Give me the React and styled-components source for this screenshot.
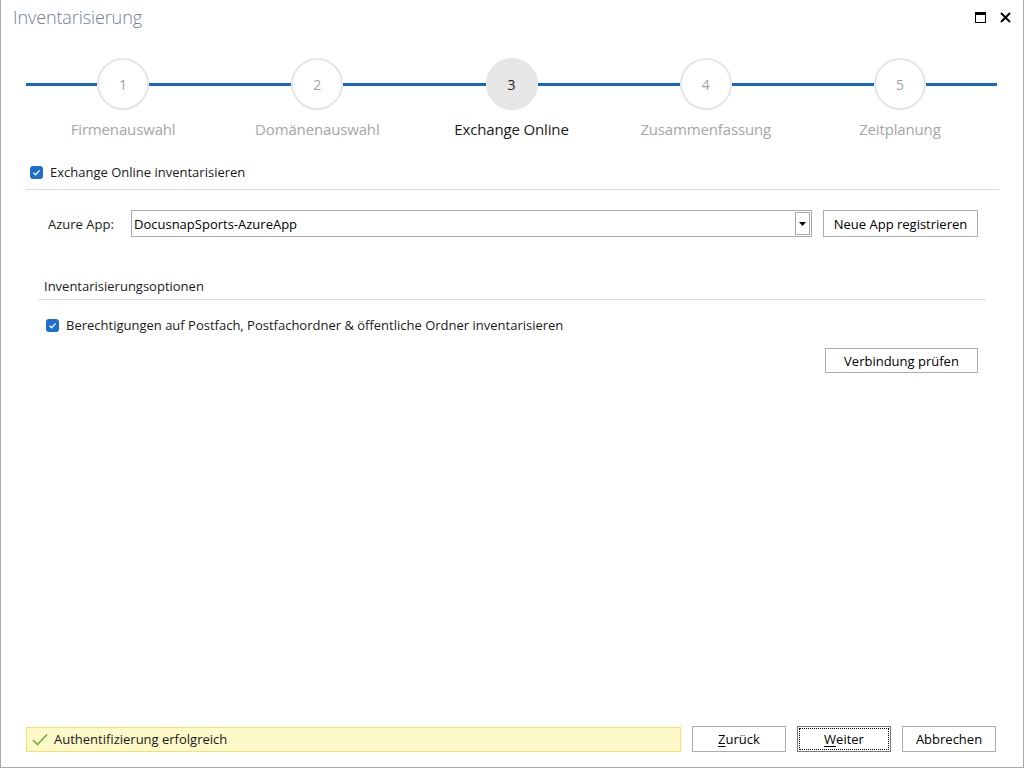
import React from "react";
import styled, { createGlobalStyle } from "styled-components";

const Global = createGlobalStyle`
  html, body { margin: 0; padding: 0; background: #fff; }
  body { font-family: "Open Sans", "Noto Sans", sans-serif; }
  * { box-sizing: border-box; }
`;

const Window = styled.div`
  width: 1024px;
  height: 768px;
  border: 1px solid #a9a9a9;
  border-top: none;
  display: flex;
  flex-direction: column;
  background: #fff;
  overflow: hidden;
`;

const TitleBar = styled.div`
  height: 34px;
  display: flex;
  align-items: center;
  justify-content: space-between;
  padding: 0 10px 0 12px;
`;

const Title = styled.div`
  font-size: 18px;
  font-weight: 300;
  color: #728195;
  letter-spacing: -0.1px;
`;

const WinButtons = styled.div`
  display: flex;
  align-items: center;
  gap: 10px;
`;

const WinButton = styled.div`
  width: 15px;
  height: 15px;
  display: flex;
  align-items: center;
  justify-content: center;
`;

const Stepper = styled.div`
  display: grid;
  grid-template-columns: repeat(5, 1fr);
  margin: 24px 26px 0 25px;
`;

const Step = styled.div`
  display: flex;
  flex-direction: column;
  align-items: center;
`;

const StepTrack = styled.div`
  display: flex;
  align-items: center;
  width: 100%;
`;

const Line = styled.div`
  flex: 1;
  height: 3px;
  background: #1766bf;
`;

const Circle = styled.div`
  width: 52px;
  height: 52px;
  border-radius: 50%;
  border: 2px solid #e6e6e6;
  background: ${(p) => (p.$active ? "#e6e6e6" : "#fff")};
  color: ${(p) => (p.$active ? "#222" : "#a3a3a3")};
  display: flex;
  align-items: center;
  justify-content: center;
  font-size: 14px;
  flex: none;
`;

const StepLabel = styled.div`
  margin-top: 9px;
  font-size: 15px;
  line-height: 20px;
  color: ${(p) => (p.$active ? "#1a1a1a" : "#a6a6a6")};
  letter-spacing: -0.15px;
`;

const Content = styled.div`
  flex: 1;
  display: flex;
  flex-direction: column;
  padding: 0 24px 0 25px;
`;

const CheckRow = styled.label`
  display: flex;
  align-items: center;
  gap: 7px;
  height: 20px;
  font-size: 13px;
  color: #1a1a1a;
  padding-left: ${(p) => p.$indent || 0}px;
  margin-top: ${(p) => p.$top || 0}px;
`;

const Box = styled.span`
  width: 13px;
  height: 13px;
  border-radius: 3px;
  background: #1c6fcd;
  display: inline-flex;
  align-items: center;
  justify-content: center;
  flex: none;
`;

const Separator = styled.div`
  height: 1px;
  background: #dcdcdc;
  margin-top: ${(p) => p.$top || 0}px;
`;

const FormRow = styled.div`
  display: flex;
  align-items: center;
  gap: 11px;
  margin-top: 20px;
  padding: 0 21px 0 22px;
`;

const FieldLabel = styled.div`
  width: 72px;
  font-size: 13px;
  color: #1a1a1a;
`;

const Combo = styled.div`
  flex: 1;
  height: 27px;
  border: 1px solid #a9a9a9;
  display: flex;
  align-items: center;
  padding: 0 1px 0 2px;
  font-size: 13px;
  color: #000;
`;

const ComboText = styled.div`
  flex: 1;
`;

const ComboArrow = styled.div`
  width: 15px;
  height: 23px;
  border: 1px solid #a9a9a9;
  display: flex;
  align-items: center;
  justify-content: center;
`;

const Button = styled.button`
  width: ${(p) => p.$w || 94}px;
  height: ${(p) => p.$h || 26}px;
  border: 1px solid ${(p) => (p.$focus ? "#7a7a7a" : "#adadad")};
  background: #fff;
  font-family: inherit;
  font-size: 13px;
  color: #000;
  padding: 0;
  outline: ${(p) => (p.$focus ? "1px dotted #000" : "none")};
  outline-offset: -3px;
  flex: none;
  u { text-decoration: underline; text-underline-offset: 2px; }
`;

const Group = styled.div`
  margin: 40px 13px 0 12px;
  display: flex;
  flex-direction: column;
`;

const GroupTitle = styled.div`
  font-size: 13px;
  line-height: 18px;
  color: #1a1a1a;
  padding-left: 6px;
`;

const RightRow = styled.div`
  display: flex;
  justify-content: flex-end;
  padding-right: 8px;
  margin-top: 13px;
`;

const Footer = styled.div`
  display: flex;
  align-items: center;
  padding: 0 27px 15px 25px;
  gap: 11px;
`;

const Status = styled.div`
  flex: 1;
  height: 25px;
  background: #fdf9c9;
  border: 1px solid #f4e06b;
  display: flex;
  align-items: center;
  gap: 6px;
  padding-left: 5px;
  font-size: 13px;
  color: #1a1a1a;
`;

const Buttons = styled.div`
  display: flex;
  gap: 11px;
`;

const Check = () => (
  <Box>
    <svg width="9" height="9" viewBox="0 0 9 9">
      <path d="M1.5 4.8 L3.6 6.8 L7.6 2.4" fill="none" stroke="#fff" strokeWidth="1.3" />
    </svg>
  </Box>
);

const steps = ["Firmenauswahl", "Domänenauswahl", "Exchange Online", "Zusammenfassung", "Zeitplanung"];

export default function App() {
  return (
    <>
      <Global />
      <Window>
        <TitleBar>
          <Title>Inventarisierung</Title>
          <WinButtons>
            <WinButton>
              <svg width="11" height="11" viewBox="0 0 11 11">
                <rect x="0.5" y="0.5" width="10" height="10" fill="none" stroke="#000" />
                <rect x="0" y="0" width="11" height="3" fill="#000" />
              </svg>
            </WinButton>
            <WinButton>
              <svg width="11" height="11" viewBox="0 0 11 11">
                <path d="M1 1 L10 10 M10 1 L1 10" stroke="#000" strokeWidth="2" />
              </svg>
            </WinButton>
          </WinButtons>
        </TitleBar>

        <Stepper>
          {steps.map((s, i) => (
            <Step key={s}>
              <StepTrack>
                <Line />
                <Circle $active={i === 2}>{i + 1}</Circle>
                <Line />
              </StepTrack>
              <StepLabel $active={i === 2}>{s}</StepLabel>
            </Step>
          ))}
        </Stepper>

        <Content>
          <CheckRow $indent={4} $top={23}>
            <Check />
            Exchange Online inventarisieren
          </CheckRow>
          <Separator $top={7} />

          <FormRow>
            <FieldLabel>Azure App:</FieldLabel>
            <Combo>
              <ComboText>DocusnapSports-AzureApp</ComboText>
              <ComboArrow>
                <svg width="7" height="4" viewBox="0 0 7 4">
                  <path d="M0 0 L7 0 L3.5 4 Z" fill="#000" />
                </svg>
              </ComboArrow>
            </Combo>
            <Button $w={155} $h={27}>Neue App registrieren</Button>
          </FormRow>

          <Group>
            <GroupTitle>Inventarisierungsoptionen</GroupTitle>
            <Separator $top={4} />
            <CheckRow $indent={8} $top={15}>
              <Check />
              Berechtigungen auf Postfach, Postfachordner &amp; öffentliche Ordner inventarisieren
            </CheckRow>
            <RightRow>
              <Button $w={153} $h={25}>Verbindung prüfen</Button>
            </RightRow>
          </Group>
        </Content>

        <Footer>
          <Status>
            <svg width="16" height="13" viewBox="0 0 16 13">
              <path d="M1 7 L5.5 11.5 L15 1.5" fill="none" stroke="#6cb33f" strokeWidth="1.6" />
            </svg>
            Authentifizierung erfolgreich
          </Status>
          <Buttons>
            <Button><u>Z</u>urück</Button>
            <Button $focus><u>W</u>eiter</Button>
            <Button>Abbrechen</Button>
          </Buttons>
        </Footer>
      </Window>
    </>
  );
}
